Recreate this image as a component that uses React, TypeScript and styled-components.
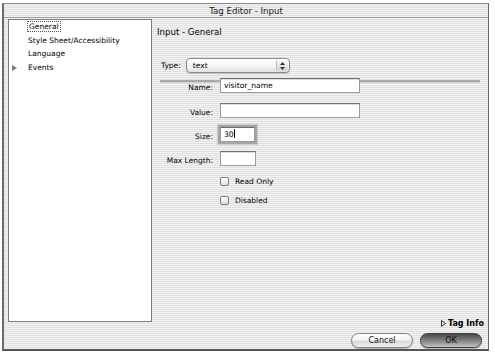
import styled, { createGlobalStyle } from "styled-components";

const GlobalStyle = createGlobalStyle`
  html, body {
    margin: 0;
    padding: 0;
    background: #ffffff;
  }
  body {
    font-family: "DejaVu Sans", "Liberation Sans", sans-serif;
    color: #000;
  }
`;

const stripes = `repeating-linear-gradient(
  to bottom,
  #f3f3f3 0px,
  #f3f3f3 1px,
  #e0e0e0 1px,
  #e0e0e0 2px
)`;

const WindowEl = styled.div`
  margin: 3px 0 0 2px;
  width: 487px;
  height: 348px;
  box-sizing: border-box;
  border-top: 1px solid #8a8a8a;
  border-left: 2px solid #6a6a6a;
  border-right: 1px solid #6a6a6a;
  border-bottom: 2px solid #555;
  background: ${stripes};
  display: flex;
  flex-direction: column;
`;

const TitleBar = styled.div`
  height: 13px;
  border-bottom: 1px solid #9c9c9c;
  display: flex;
  align-items: center;
  justify-content: center;
  font-size: 8.6px;
  color: #1a1a1a;
`;

const Body = styled.div`
  flex: 1;
  display: flex;
  min-height: 0;
`;

const Sidebar = styled.ul`
  list-style: none;
  margin: 1px 0 0 4px;
  padding: 0;
  width: 144px;
  height: 303px;
  box-sizing: border-box;
  background: #fff;
  border: 1px solid #7c7c7c;
  flex-shrink: 0;
`;

const SideItem = styled.li<{ $arrow?: boolean }>`
  position: relative;
  height: 13.5px;
  line-height: 13.5px;
  padding-left: 19px;
  font-size: 7.5px;
  white-space: nowrap;
  &::before {
    content: "";
    display: ${(p) => (p.$arrow ? "block" : "none")};
    position: absolute;
    left: 3px;
    top: 4px;
    border-left: 5px solid #7a7a7a;
    border-top: 3px solid transparent;
    border-bottom: 3px solid transparent;
  }
`;

const Focused = styled.span`
  outline: 1px dotted #555;
  outline-offset: 0px;
  padding: 0 1px;
`;

const Main = styled.div`
  flex: 1;
  display: flex;
  flex-direction: column;
  padding: 9px 3px 2px 0;
`;

const Heading = styled.div`
  font-size: 8.6px;
  padding-left: 5px;
  height: 11px;
  line-height: 11px;
`;

const TypeRow = styled.div`
  display: flex;
  align-items: center;
  gap: 5px;
  margin: 20px 0 0 9px;
  font-size: 7.5px;
`;

const Select = styled.div`
  width: 104px;
  height: 15px;
  box-sizing: border-box;
  border: 1px solid #8a8a8a;
  border-radius: 4px;
  background: linear-gradient(to bottom, #ffffff, #f2f2f2 60%, #e2e2e2);
  display: flex;
  align-items: center;
  padding-left: 6px;
  box-shadow: 0 1px 1px rgba(0, 0, 0, 0.15);
`;

const SelectText = styled.span`
  flex: 1;
`;

const Stepper = styled.span`
  width: 11px;
  height: 11px;
  margin-right: 1px;
  border-radius: 2px;
  border-left: 1px solid #bdbdbd;
  background: linear-gradient(to bottom, #fafafa, #d4d4d4);
  display: flex;
  align-items: center;
  justify-content: center;
`;

const Fields = styled.div`
  display: flex;
  flex-direction: column;
  margin-top: 5px;
`;

const FieldRow = styled.div<{ $rule?: boolean; $gap: number }>`
  position: relative;
  display: flex;
  align-items: center;
  gap: 7px;
  margin-bottom: ${(p) => p.$gap}px;
  &::before {
    content: "";
    display: ${(p) => (p.$rule ? "block" : "none")};
    position: absolute;
    left: 8px;
    right: 5px;
    top: 2px;
    height: 2px;
    background: #a9a9a9;
    border-bottom: 1px solid #d0d0d0;
  }
`;

const Label = styled.label`
  position: relative;
  width: 61px;
  text-align: right;
  font-size: 7.5px;
  padding-top: 3px;
`;

const TextInput = styled.div<{ $w: number; $focus?: boolean }>`
  position: relative;
  width: ${(p) => p.$w}px;
  height: 15px;
  box-sizing: border-box;
  background: #fff;
  border: 1px solid #9a9a9a;
  border-top-color: #6e6e6e;
  font-size: 7.6px;
  line-height: 13px;
  padding-left: 3px;
  box-shadow: ${(p) =>
    p.$focus ? "0 0 0 2px #a6a6a6, 0 0 1px 3px #cfcfcf" : "inset 0 1px 0 #dcdcdc"};
`;

const Caret = styled.span`
  display: inline-block;
  width: 1px;
  height: 9px;
  background: #000;
  vertical-align: -1px;
`;

const CheckRow = styled.div<{ $gap: number }>`
  display: flex;
  align-items: center;
  gap: 6px;
  margin-left: 68px;
  margin-bottom: ${(p) => p.$gap}px;
  font-size: 7.5px;
`;

const CheckBox = styled.span`
  width: 9px;
  height: 9px;
  box-sizing: border-box;
  border: 1px solid #7e7e7e;
  border-radius: 2px;
  background: linear-gradient(to bottom, #ffffff, #dcdcdc);
`;

const TagInfo = styled.div`
  margin-top: auto;
  align-self: flex-end;
  display: flex;
  align-items: center;
  gap: 2px;
  font-size: 8px;
  font-weight: bold;
  padding-right: 1px;
`;

const Footer = styled.div`
  height: 19px;
  display: flex;
  justify-content: flex-end;
  align-items: flex-start;
  gap: 7px;
  padding: 3px 6px 0 0;
  box-sizing: border-box;
`;

const Button = styled.div<{ $primary?: boolean }>`
  width: 62px;
  height: 15px;
  box-sizing: border-box;
  border-radius: 8px;
  border: 1px solid ${(p) => (p.$primary ? "#3e3e3e" : "#808080")};
  background: ${(p) =>
    p.$primary
      ? "linear-gradient(to bottom, #4a4a4a 0%, #6f6f6f 35%, #9a9a9a 70%, #c4c4c4 100%)"
      : "linear-gradient(to bottom, #ffffff 0%, #f4f4f4 45%, #dadada 55%, #f0f0f0 100%)"};
  box-shadow: 0 1px 1px rgba(0, 0, 0, 0.25);
  display: flex;
  align-items: center;
  justify-content: center;
  font-size: 8px;
  color: #111;
`;

export default function App() {
  return (
    <>
      <GlobalStyle />
      <WindowEl>
        <TitleBar>Tag Editor - Input</TitleBar>
        <Body>
          <Sidebar>
            <SideItem>
              <Focused>General</Focused>
            </SideItem>
            <SideItem>Style Sheet/Accessibility</SideItem>
            <SideItem>Language</SideItem>
            <SideItem $arrow>Events</SideItem>
          </Sidebar>
          <Main>
            <Heading>Input - General</Heading>
            <TypeRow>
              <span>Type:</span>
              <Select>
                <SelectText>text</SelectText>
                <Stepper>
                  <svg width="5" height="8" viewBox="0 0 5 8">
                    <path d="M2.5 0 L5 3 L0 3 Z M2.5 8 L5 5 L0 5 Z" fill="#333" />
                  </svg>
                </Stepper>
              </Select>
            </TypeRow>
            <Fields>
              <FieldRow $rule $gap={10}>
                <Label>Name:</Label>
                <TextInput $w={140}>visitor_name</TextInput>
              </FieldRow>
              <FieldRow $gap={9}>
                <Label>Value:</Label>
                <TextInput $w={140} />
              </FieldRow>
              <FieldRow $gap={9}>
                <Label>Size:</Label>
                <TextInput $w={35} $focus>
                  30
                  <Caret />
                </TextInput>
              </FieldRow>
              <FieldRow $gap={11}>
                <Label>Max Length:</Label>
                <TextInput $w={36} />
              </FieldRow>
              <CheckRow $gap={10}>
                <CheckBox />
                <span>Read Only</span>
              </CheckRow>
              <CheckRow $gap={0}>
                <CheckBox />
                <span>Disabled</span>
              </CheckRow>
            </Fields>
            <TagInfo>
              <svg width="5" height="7" viewBox="0 0 5 7">
                <path d="M0.5 0.5 L4.5 3.5 L0.5 6.5 Z" fill="none" stroke="#222" strokeWidth="0.9" />
              </svg>
              <span>Tag Info</span>
            </TagInfo>
          </Main>
        </Body>
        <Footer>
          <Button>Cancel</Button>
          <Button $primary>OK</Button>
        </Footer>
      </WindowEl>
    </>
  );
}
